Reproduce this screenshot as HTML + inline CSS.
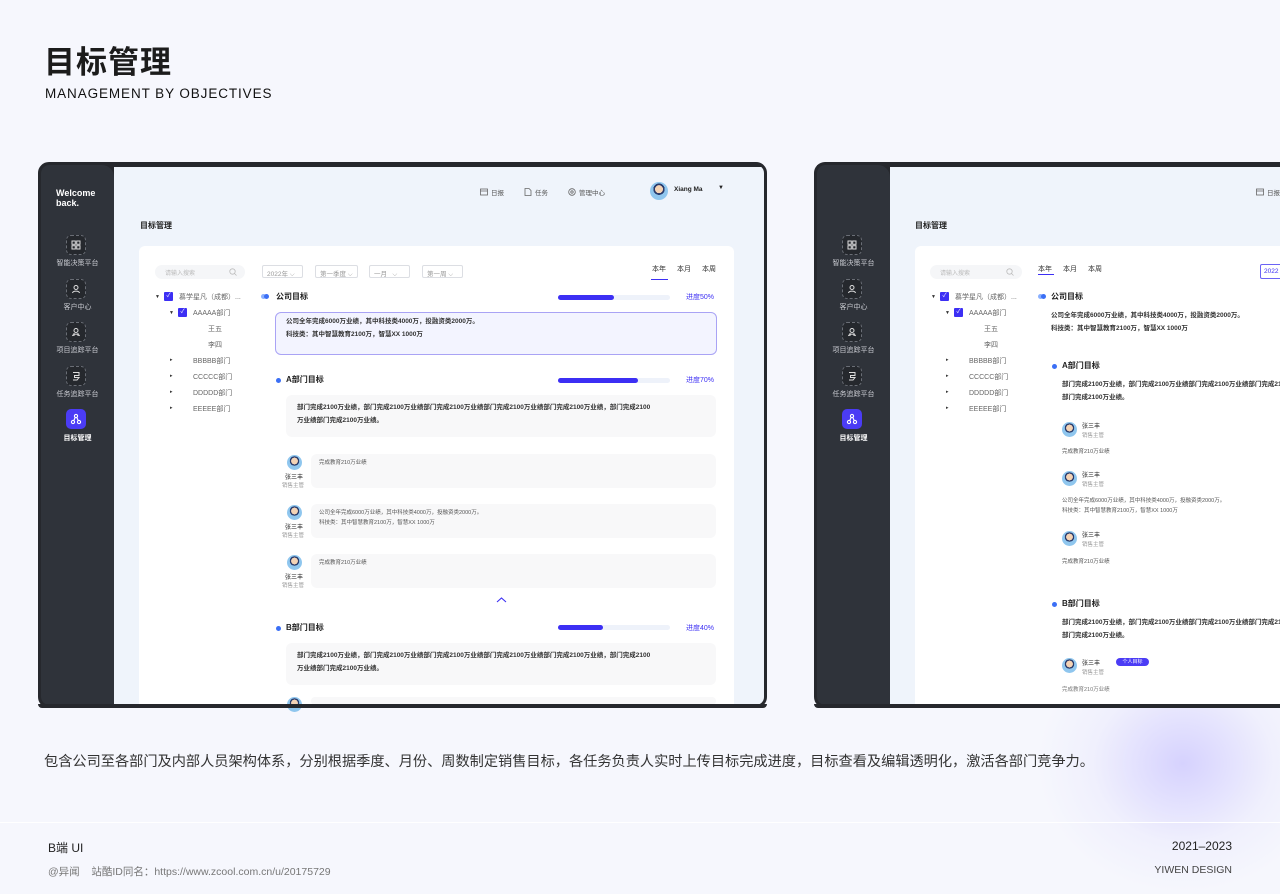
<!DOCTYPE html>
<html><head><meta charset="utf-8">
<style>
*{margin:0;padding:0;box-sizing:border-box}
body{width:1280px;height:894px;overflow:hidden;position:relative;background:#f6f7fd;font-family:"Liberation Sans","Noto Sans CJK SC",sans-serif;color:#222}
.a{position:absolute;white-space:nowrap}
.dev{position:absolute;top:162px;height:546px;border:3px solid #26282d;border-radius:11px;background:#26282d;overflow:hidden}
.side{position:absolute;left:0;top:0;bottom:0;width:73px;background:#2f333a;border-radius:8px 12px 0 8px}
.main{position:absolute;left:73px;top:2px;right:0;bottom:0;background:#eff4fb;overflow:hidden}
.ib{position:absolute;left:25px;width:20px;height:20px;border:1px dashed #6a6e76;border-radius:5px;background:#25282d}
.ib svg{position:absolute;left:4px;top:4px}
.il{position:absolute;left:0;width:73px;text-align:center;font-size:7px;color:#c8cad0}
.card{position:absolute;background:#fff;border-radius:6px}
.t7{font-size:7px;color:#333}
.g{color:#999}
.sel{position:absolute;height:13px;border:1px solid #dcdee3;border-radius:2px;font-size:6.5px;color:#999;padding:2px 4px;top:265px}
.bar{position:absolute;height:5px;background:#eef2fa;border-radius:3px;width:112px}
.bar i{position:absolute;left:0;top:0;bottom:0;background:#3c2ff4;border-radius:3px}
.box{position:absolute;background:#f8f8f9;border-radius:6px}
.av{position:absolute;width:13px;height:13px;border-radius:50%;background:radial-gradient(circle at 50% 40%,#f4d3b5 0 28%,#2a3b6b 29% 40%,#8fc6ee 41%)}
.dot{position:absolute;width:5px;height:5px;border-radius:50%;background:#3b6ff5}
.cb{position:absolute;width:9px;height:9px;background:#3c2ff4;border-radius:1px;color:#fff;font-size:6px;line-height:9px;text-align:center}
.tri{position:absolute;font-size:5px;color:#333}
</style></head><body>
<div class="a" style="left:1040px;top:660px;width:260px;height:230px;background:radial-gradient(ellipse at 55% 45%,rgba(175,165,255,.45),rgba(205,200,255,.15) 45%,rgba(246,247,253,0) 72%)"></div>
<div class="a" style="left:44px;top:37px;font-size:31px;font-weight:bold;color:#1c1c1c;letter-spacing:1px">目标管理</div>
<div class="a" style="left:45px;top:86px;font-size:13.5px;letter-spacing:0.9px;color:#111">MANAGEMENT BY OBJECTIVES</div>

<!-- DEVICE 1 -->
<div class="dev" style="left:38px;width:729px">
 <div class="side">
  <div class="a" style="left:15px;top:23px;font-size:9px;font-weight:bold;color:#fff;line-height:10px">Welcome<br>back.</div>
  <div class="ib" style="top:70px"><svg width="10" height="10" viewBox="0 0 10 10" fill="none" stroke="#ddd" stroke-width="1"><rect x="1" y="1" width="3.3" height="3.3"/><rect x="5.7" y="1" width="3.3" height="3.3"/><rect x="1" y="5.7" width="3.3" height="3.3"/><rect x="5.7" y="5.7" width="3.3" height="3.3"/></svg></div>
  <div class="il" style="top:93px">智能决策平台</div>
  <div class="ib" style="top:114px"><svg width="10" height="10" viewBox="0 0 10 10" fill="none" stroke="#ddd" stroke-width="1"><circle cx="5" cy="3.5" r="2"/><path d="M1.5 9c.5-2.5 6.5-2.5 7 0"/></svg></div>
  <div class="il" style="top:137px">客户中心</div>
  <div class="ib" style="top:157px"><svg width="10" height="10" viewBox="0 0 10 10" fill="none" stroke="#ddd" stroke-width="1"><circle cx="5" cy="3.5" r="2"/><path d="M1.5 9c.5-2.5 6.5-2.5 7 0M3 6v3M7 6v3"/></svg></div>
  <div class="il" style="top:180px">项目追踪平台</div>
  <div class="ib" style="top:201px"><svg width="10" height="10" viewBox="0 0 10 10" fill="none" stroke="#ddd" stroke-width="1"><path d="M2 1.5h6v3H3.5v2H8L6 9H2"/></svg></div>
  <div class="il" style="top:224px">任务追踪平台</div>
  <div class="a" style="left:25px;top:244px;width:20px;height:20px;border-radius:5px;background:#4b3cf5"><svg style="position:absolute;left:4px;top:4px" width="12" height="12" viewBox="0 0 12 12" fill="none" stroke="#fff" stroke-width="1.1"><circle cx="6" cy="3" r="1.6"/><circle cx="3" cy="9" r="1.6"/><circle cx="9" cy="9" r="1.6"/><path d="M5.2 4.4 3.8 7.6M6.8 4.4l1.4 3.2"/></svg></div>
  <div class="il" style="top:268px;color:#fff;font-weight:bold">目标管理</div>
 </div>
 <div class="main">
  <svg class="a" style="left:366px;top:21px" width="8" height="8" viewBox="0 0 8 8" fill="none" stroke="#666" stroke-width=".8"><rect x=".5" y="1" width="7" height="6"/><path d="M.5 3h7"/></svg>
  <div class="a" style="left:377px;top:20px;color:#555;font-size:6.5px">日报</div>
  <svg class="a" style="left:410px;top:21px" width="8" height="8" viewBox="0 0 8 8" fill="none" stroke="#666" stroke-width=".8"><path d="M1 .5h4l2 2v5H1z"/></svg>
  <div class="a" style="left:421px;top:20px;color:#555;font-size:6.5px">任务</div>
  <svg class="a" style="left:454px;top:21px" width="8" height="8" viewBox="0 0 8 8" fill="none" stroke="#666" stroke-width=".8"><circle cx="4" cy="4" r="3.3"/><circle cx="4" cy="4" r="1.2"/></svg>
  <div class="a" style="left:465px;top:20px;color:#555;font-size:6.5px">管理中心</div>
  <div class="av" style="left:536px;top:15px;width:18px;height:18px"></div>
  <div class="a" style="left:560px;top:19px;font-size:6.5px;font-weight:bold">Xiang Ma</div>
  <div class="a" style="left:604px;top:18px;font-size:6px">▼</div>
  <div class="a" style="left:26px;top:53px;font-size:8px;font-weight:bold">目标管理</div>
  <div class="card" style="left:25px;top:79px;width:595px;height:480px"></div>
 </div>
</div>
<div class="a" style="left:155px;top:265px;width:90px;height:14px;background:#f5f6f8;border-radius:7px;font-size:6px;color:#bbb;padding:3px 10px">请输入搜索</div>
<svg class="a" style="left:229px;top:268px" width="8" height="8" viewBox="0 0 8 8" fill="none" stroke="#bbb" stroke-width=".8"><circle cx="3.5" cy="3.5" r="2.7"/><path d="M5.5 5.5 7.5 7.5"/></svg>
<div class="sel" style="left:262px;width:41px">2022年 ⌵</div>
<div class="sel" style="left:315px;width:43px">第一季度 ⌵</div>
<div class="sel" style="left:369px;width:41px">一月 &nbsp;&nbsp;⌵</div>
<div class="sel" style="left:422px;width:41px">第一周 ⌵</div>
<div class="a t7" style="left:652px;top:264px">本年</div>
<div class="a t7" style="left:677px;top:264px">本月</div>
<div class="a t7" style="left:702px;top:264px">本周</div>
<div class="a" style="left:651px;top:279px;width:17px;height:1px;background:#3c2ff4"></div>
<div class="tri" style="left:155px;top:294px">▼</div><div class="cb" style="left:164px;top:292px">✓</div>
<div class="a t7" style="left:179px;top:292px;color:#666">慕学星凡（成都）...</div>
<div class="tri" style="left:169px;top:310px">▼</div><div class="cb" style="left:178px;top:308px">✓</div>
<div class="a t7" style="left:193px;top:308px;color:#666">AAAAA部门</div>
<div class="a t7" style="left:208px;top:324px;color:#666">王五</div>
<div class="a t7" style="left:208px;top:340px;color:#666">李四</div>
<div class="tri" style="left:170px;top:357px">▸</div><div class="a t7" style="left:193px;top:356px;color:#666">BBBBB部门</div>
<div class="tri" style="left:170px;top:373px">▸</div><div class="a t7" style="left:193px;top:372px;color:#666">CCCCC部门</div>
<div class="tri" style="left:170px;top:389px">▸</div><div class="a t7" style="left:193px;top:388px;color:#666">DDDDD部门</div>
<div class="tri" style="left:170px;top:405px">▸</div><div class="a t7" style="left:193px;top:404px;color:#666">EEEEE部门</div>

<div class="dot" style="left:261px;top:294px;background:#8ab0ff"></div><div class="dot" style="left:264px;top:294px"></div>
<div class="a" style="left:276px;top:291px;font-size:8px;font-weight:bold">公司目标</div>
<div class="bar" style="left:558px;top:295px"><i style="width:50%"></i></div>
<div class="a" style="left:686px;top:292px;font-size:7px;color:#3c2ff4">进度50%</div>
<div class="a" style="left:275px;top:312px;width:442px;height:43px;border:1px solid #a9a3f5;background:#f3f4ff;border-radius:6px"></div>
<div class="a" style="left:286px;top:316px;font-size:6.5px;line-height:12.5px;font-weight:bold;color:#333">公司全年完成6000万业绩，其中科技类4000万，投融资类2000万。<br>科技类：其中智慧教育2100万，智慧XX 1000万</div>

<div class="dot" style="left:276px;top:378px"></div>
<div class="a" style="left:286px;top:374px;font-size:8px;font-weight:bold">A部门目标</div>
<div class="bar" style="left:558px;top:378px"><i style="width:71%"></i></div>
<div class="a" style="left:686px;top:375px;font-size:7px;color:#3c2ff4">进度70%</div>
<div class="box" style="left:286px;top:395px;width:430px;height:42px"></div>
<div class="a" style="left:297px;top:401px;font-size:6.5px;line-height:13px;font-weight:bold;color:#333">部门完成2100万业绩，部门完成2100万业绩部门完成2100万业绩部门完成2100万业绩部门完成2100万业绩，部门完成2100<br>万业绩部门完成2100万业绩。</div>

<div class="av" style="left:287px;top:455px;width:15px;height:15px"></div><div class="a" style="left:285px;top:472px;font-size:6px">张三丰</div><div class="a" style="left:282px;top:481px;font-size:5.5px;color:#999">销售主管</div>
<div class="box" style="left:311px;top:454px;width:405px;height:34px"></div><div class="a" style="left:319px;top:458px;font-size:5.5px;color:#555">完成教育210万业绩</div>
<div class="av" style="left:287px;top:505px;width:15px;height:15px"></div><div class="a" style="left:285px;top:522px;font-size:6px">张三丰</div><div class="a" style="left:282px;top:531px;font-size:5.5px;color:#999">销售主管</div>
<div class="box" style="left:311px;top:504px;width:405px;height:34px"></div><div class="a" style="left:319px;top:508px;font-size:5.5px;line-height:10px;color:#555">公司全年完成6000万业绩，其中科技类4000万，投融资类2000万。<br>科技类：其中智慧教育2100万，智慧XX 1000万</div>
<div class="av" style="left:287px;top:555px;width:15px;height:15px"></div><div class="a" style="left:285px;top:572px;font-size:6px">张三丰</div><div class="a" style="left:282px;top:581px;font-size:5.5px;color:#999">销售主管</div>
<div class="box" style="left:311px;top:554px;width:405px;height:34px"></div><div class="a" style="left:319px;top:558px;font-size:5.5px;color:#555">完成教育210万业绩</div>
<svg class="a" style="left:496px;top:597px" width="11" height="6" viewBox="0 0 11 6" fill="none" stroke="#3c2ff4" stroke-width="1.1"><path d="M1 5 5.5 1 10 5"/></svg>

<div class="dot" style="left:276px;top:626px"></div>
<div class="a" style="left:286px;top:622px;font-size:8px;font-weight:bold">B部门目标</div>
<div class="bar" style="left:558px;top:625px"><i style="width:40%"></i></div>
<div class="a" style="left:686px;top:623px;font-size:7px;color:#3c2ff4">进度40%</div>
<div class="box" style="left:286px;top:643px;width:430px;height:42px"></div>
<div class="a" style="left:297px;top:649px;font-size:6.5px;line-height:13px;font-weight:bold;color:#333">部门完成2100万业绩，部门完成2100万业绩部门完成2100万业绩部门完成2100万业绩部门完成2100万业绩，部门完成2100<br>万业绩部门完成2100万业绩。</div>
<div class="av" style="left:287px;top:697px;width:15px;height:15px"></div>
<div class="box" style="left:311px;top:697px;width:405px;height:8px"></div>
<div class="a" style="left:38px;top:704px;width:729px;height:4px;background:#26282d;border-radius:0 0 8px 8px"></div>

<!-- DEVICE 2 -->
<div class="dev" style="left:814px;width:520px;border-right:none">
 <div class="side">
  <div class="ib" style="top:70px"><svg width="10" height="10" viewBox="0 0 10 10" fill="none" stroke="#ddd" stroke-width="1"><rect x="1" y="1" width="3.3" height="3.3"/><rect x="5.7" y="1" width="3.3" height="3.3"/><rect x="1" y="5.7" width="3.3" height="3.3"/><rect x="5.7" y="5.7" width="3.3" height="3.3"/></svg></div>
  <div class="il" style="top:93px">智能决策平台</div>
  <div class="ib" style="top:114px"><svg width="10" height="10" viewBox="0 0 10 10" fill="none" stroke="#ddd" stroke-width="1"><circle cx="5" cy="3.5" r="2"/><path d="M1.5 9c.5-2.5 6.5-2.5 7 0"/></svg></div>
  <div class="il" style="top:137px">客户中心</div>
  <div class="ib" style="top:157px"><svg width="10" height="10" viewBox="0 0 10 10" fill="none" stroke="#ddd" stroke-width="1"><circle cx="5" cy="3.5" r="2"/><path d="M1.5 9c.5-2.5 6.5-2.5 7 0M3 6v3M7 6v3"/></svg></div>
  <div class="il" style="top:180px">项目追踪平台</div>
  <div class="ib" style="top:201px"><svg width="10" height="10" viewBox="0 0 10 10" fill="none" stroke="#ddd" stroke-width="1"><path d="M2 1.5h6v3H3.5v2H8L6 9H2"/></svg></div>
  <div class="il" style="top:224px">任务追踪平台</div>
  <div class="a" style="left:25px;top:244px;width:20px;height:20px;border-radius:5px;background:#4b3cf5"><svg style="position:absolute;left:4px;top:4px" width="12" height="12" viewBox="0 0 12 12" fill="none" stroke="#fff" stroke-width="1.1"><circle cx="6" cy="3" r="1.6"/><circle cx="3" cy="9" r="1.6"/><circle cx="9" cy="9" r="1.6"/><path d="M5.2 4.4 3.8 7.6M6.8 4.4l1.4 3.2"/></svg></div>
  <div class="il" style="top:268px;color:#fff;font-weight:bold">目标管理</div>
 </div>
 <div class="main">
  <svg class="a" style="left:366px;top:21px" width="8" height="8" viewBox="0 0 8 8" fill="none" stroke="#666" stroke-width=".8"><rect x=".5" y="1" width="7" height="6"/><path d="M.5 3h7"/></svg>
  <div class="a" style="left:377px;top:20px;color:#555;font-size:6.5px">日报</div>
  <div class="a" style="left:25px;top:53px;font-size:8px;font-weight:bold">目标管理</div>
  <div class="card" style="left:25px;top:79px;width:500px;height:480px"></div>
 </div>
</div>
<div class="a" style="left:930px;top:265px;width:92px;height:14px;background:#f5f6f8;border-radius:7px;font-size:6px;color:#bbb;padding:3px 10px">请输入搜索</div>
<svg class="a" style="left:1006px;top:268px" width="8" height="8" viewBox="0 0 8 8" fill="none" stroke="#bbb" stroke-width=".8"><circle cx="3.5" cy="3.5" r="2.7"/><path d="M5.5 5.5 7.5 7.5"/></svg>
<div class="a t7" style="left:1038px;top:264px">本年</div>
<div class="a t7" style="left:1063px;top:264px">本月</div>
<div class="a t7" style="left:1088px;top:264px">本周</div>
<div class="a" style="left:1038px;top:274px;width:16px;height:1px;background:#3c2ff4"></div>
<div class="a" style="left:1260px;top:264px;width:30px;height:15px;border:1px solid #6b63f5;border-radius:2px;font-size:6.5px;color:#3c2ff4;padding:3px 3px">2022</div>
<div class="tri" style="left:931px;top:294px">▼</div><div class="cb" style="left:940px;top:292px">✓</div>
<div class="a t7" style="left:955px;top:292px;color:#666">慕学星凡（成都）...</div>
<div class="tri" style="left:945px;top:310px">▼</div><div class="cb" style="left:954px;top:308px">✓</div>
<div class="a t7" style="left:969px;top:308px;color:#666">AAAAA部门</div>
<div class="a t7" style="left:984px;top:324px;color:#666">王五</div>
<div class="a t7" style="left:984px;top:340px;color:#666">李四</div>
<div class="tri" style="left:946px;top:357px">▸</div><div class="a t7" style="left:969px;top:356px;color:#666">BBBBB部门</div>
<div class="tri" style="left:946px;top:373px">▸</div><div class="a t7" style="left:969px;top:372px;color:#666">CCCCC部门</div>
<div class="tri" style="left:946px;top:389px">▸</div><div class="a t7" style="left:969px;top:388px;color:#666">DDDDD部门</div>
<div class="tri" style="left:946px;top:405px">▸</div><div class="a t7" style="left:969px;top:404px;color:#666">EEEEE部门</div>

<div class="dot" style="left:1038px;top:294px;background:#8ab0ff"></div><div class="dot" style="left:1041px;top:294px"></div>
<div class="a" style="left:1051px;top:291px;font-size:8px;font-weight:bold">公司目标</div>
<div class="a" style="left:1051px;top:310px;font-size:6.5px;line-height:12.5px;font-weight:bold;color:#333">公司全年完成6000万业绩，其中科技类4000万，投融资类2000万。<br>科技类：其中智慧教育2100万，智慧XX 1000万</div>
<div class="dot" style="left:1052px;top:364px"></div>
<div class="a" style="left:1062px;top:360px;font-size:8px;font-weight:bold">A部门目标</div>
<div class="a" style="left:1062px;top:379px;font-size:6.5px;line-height:12.5px;font-weight:bold;color:#333">部门完成2100万业绩，部门完成2100万业绩部门完成2100万业绩部门完成2100万业绩<br>部门完成2100万业绩。</div>
<div class="av" style="left:1062px;top:422px;width:15px;height:15px"></div><div class="a" style="left:1082px;top:421px;font-size:6px">张三丰</div><div class="a" style="left:1082px;top:431px;font-size:5.5px;color:#999">销售主管</div>
<div class="a" style="left:1062px;top:447px;font-size:5.5px;color:#555">完成教育210万业绩</div>
<div class="av" style="left:1062px;top:471px;width:15px;height:15px"></div><div class="a" style="left:1082px;top:470px;font-size:6px">张三丰</div><div class="a" style="left:1082px;top:480px;font-size:5.5px;color:#999">销售主管</div>
<div class="a" style="left:1062px;top:496px;font-size:5.5px;line-height:10px;color:#555">公司全年完成6000万业绩，其中科技类4000万，投融资类2000万。<br>科技类：其中智慧教育2100万，智慧XX 1000万</div>
<div class="av" style="left:1062px;top:531px;width:15px;height:15px"></div><div class="a" style="left:1082px;top:530px;font-size:6px">张三丰</div><div class="a" style="left:1082px;top:540px;font-size:5.5px;color:#999">销售主管</div>
<div class="a" style="left:1062px;top:557px;font-size:5.5px;color:#555">完成教育210万业绩</div>
<div class="dot" style="left:1052px;top:602px"></div>
<div class="a" style="left:1062px;top:598px;font-size:8px;font-weight:bold">B部门目标</div>
<div class="a" style="left:1062px;top:617px;font-size:6.5px;line-height:12.5px;font-weight:bold;color:#333">部门完成2100万业绩，部门完成2100万业绩部门完成2100万业绩部门完成2100万业绩<br>部门完成2100万业绩。</div>
<div class="av" style="left:1062px;top:658px;width:15px;height:15px"></div><div class="a" style="left:1082px;top:658px;font-size:6px">张三丰</div><div class="a" style="left:1082px;top:668px;font-size:5.5px;color:#999">销售主管</div>
<div class="a" style="left:1116px;top:658px;width:33px;height:8px;border-radius:4px;background:#4b3cf5;color:#fff;font-size:5px;text-align:center;line-height:8px">个人目标</div>
<div class="a" style="left:1062px;top:685px;font-size:5.5px;color:#777">完成教育210万业绩</div>
<div class="a" style="left:814px;top:704px;width:470px;height:4px;background:#26282d;border-radius:0 0 0 8px"></div>

<div class="a" style="left:44px;top:751px;font-size:14.2px;color:#333">包含公司至各部门及内部人员架构体系，分别根据季度、月份、周数制定销售目标，各任务负责人实时上传目标完成进度，目标查看及编辑透明化，激活各部门竞争力。</div>
<div class="a" style="left:0;top:822px;width:1280px;height:1px;background:#fff"></div>
<div class="a" style="left:48px;top:839px;font-size:12px;color:#222">B端 UI</div>
<div class="a" style="left:48px;top:864px;font-size:10.5px;color:#777">@异闻 &nbsp;&nbsp;&nbsp;站酷ID同名：https://www.zcool.com.cn/u/20175729</div>
<div class="a" style="right:48px;top:839px;font-size:12px;color:#222">2021–2023</div>
<div class="a" style="right:48px;top:864px;font-size:10.5px;color:#444">YIWEN DESIGN</div>
</body></html>
